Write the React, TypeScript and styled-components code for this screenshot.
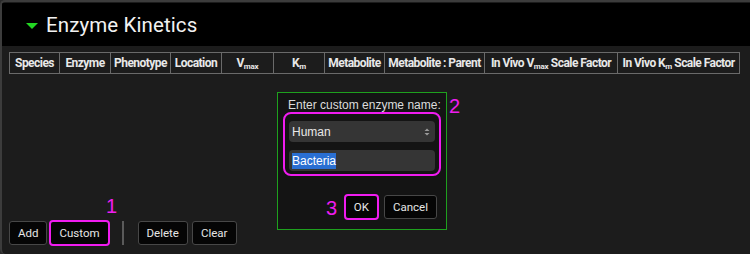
import styled, { createGlobalStyle, css } from 'styled-components'

const Global = createGlobalStyle`
  html, body { margin: 0; padding: 0; background: #2a2a2a; }
  * { box-sizing: border-box; }
`

const Panel = styled.div`
  position: relative;
  width: 750px;
  height: 254px;
  display: flex;
  flex-direction: column;
  background: #1c1c1c;
  border-top: 2px solid #3c3c3c;
  border-left: 2px solid #3c3c3c;
  border-radius: 5px 0 0 5px;
  overflow: hidden;
  font-family: Roboto, 'Liberation Sans', sans-serif;
`

const Header = styled.div`
  height: 43px;
  margin-top: 1px;
  background: #000;
  display: flex;
  align-items: center;
  gap: 8px;
  padding-left: 24px;
`

const Caret = styled.span`
  width: 0;
  height: 0;
  border-left: 6px solid transparent;
  border-right: 6px solid transparent;
  border-top: 6px solid #22d622;
  margin-top: 2px;
`

const Title = styled.h1`
  margin: 0;
  font-size: 20.5px;
  font-weight: 400;
  color: #f2f2f2;
  letter-spacing: 0.1px;
`

const Body = styled.div`
  flex: 1;
  display: flex;
  flex-direction: column;
  justify-content: space-between;
  padding: 6px 0 8px 7px;
`

const Table = styled.table`
  border-collapse: collapse;
  table-layout: fixed;
  width: 730px;
`

const Th = styled.th<{ $w: number }>`
  width: ${({ $w }) => $w}px;
  height: 21px;
  padding: 0;
  border: 1px solid #6a6a6a;
  color: #e8e8e8;
  font-size: 12px;
  font-weight: 700;
  letter-spacing: -0.55px;
  text-align: center;
  white-space: nowrap;
  overflow: hidden;
`

const Sub = styled.sub`
  font-size: 8px;
  vertical-align: -2px;
  letter-spacing: -0.2px;
`

const Toolbar = styled.div`
  display: flex;
  align-items: center;
  gap: 4px;
`

const Btn = styled.button<{ $hl?: boolean }>`
  height: 24px;
  padding: 0 8px;
  background: #050505;
  color: #e6e6e6;
  border: 1px solid #474747;
  border-radius: 3px;
  font-family: Roboto, 'Liberation Sans', sans-serif;
  font-size: 11.5px;
  ${({ $hl }) => $hl && css`
    border: 2px solid #f01cf0;
    border-radius: 4px;
    height: 26px;
    padding: 0 8px;
  `}
`

const FirstPair = styled.div`
  display: flex;
  align-items: center;
  gap: 2px;
`

const Divider = styled.span`
  width: 2px;
  height: 24px;
  background: #5a5a5a;
  margin: 0 10px 0 8px;
`

const Dialog = styled.div`
  position: absolute;
  left: 275px;
  top: 90px;
  width: 170px;
  height: 138px;
  border: 1px solid #1ea01e;
  background: #141414;
  padding: 5px 9px 0 9px;
  display: flex;
  flex-direction: column;
`

const Label = styled.div`
  font-family: 'Liberation Sans', Arial, sans-serif;
  font-size: 12px;
  line-height: 14px;
  white-space: nowrap;
  color: #dcdcdc;
  margin-left: 1px;
`

const FieldGroup = styled.div`
  margin: 0 -4px;
  padding: 7px 4px 3px 4px;
  border: 2px solid #f01cf0;
  border-radius: 8px;
  display: flex;
  flex-direction: column;
  gap: 8px;
`

const Field = styled.div`
  height: 21px;
  background: #353535;
  border-radius: 4px;
  display: flex;
  align-items: center;
  justify-content: space-between;
  padding: 0 5px 0 3px;
  font-family: 'Liberation Sans', Arial, sans-serif;
  font-size: 12px;
  color: #e8e8e8;
`

const Selected = styled.span`
  background: #2a6fd2;
  color: #fff;
  padding: 1px 0;
`

const Actions = styled.div`
  margin-top: auto;
  margin-bottom: 9px;
  display: flex;
  justify-content: flex-end;
  align-items: center;
  gap: 5px;
`

const Mark = styled.span<{ $x: number; $y: number }>`
  position: absolute;
  left: ${({ $x }) => $x}px;
  top: ${({ $y }) => $y}px;
  color: #f01cf0;
  font-family: 'Liberation Sans', Arial, sans-serif;
  font-size: 20px;
  line-height: 1;
`

const cols: [number, React.ReactNode][] = [
  [50, 'Species'],
  [51, 'Enzyme'],
  [60, 'Phenotype'],
  [51, 'Location'],
  [52, <>V<Sub>max</Sub></>],
  [51, <>K<Sub>m</Sub></>],
  [60, 'Metabolite'],
  [100, 'Metabolite : Parent'],
  [133, <>In Vivo V<Sub>max</Sub> Scale Factor</>],
  [122, <>In Vivo K<Sub>m</Sub> Scale Factor</>],
]

export default function App() {
  return (
    <>
      <Global />
      <Panel>
        <Header>
          <Caret />
          <Title>Enzyme Kinetics</Title>
        </Header>
        <Body>
          <Table>
            <thead>
              <tr>
                {cols.map(([w, label], i) => (
                  <Th key={i} $w={w}>{label}</Th>
                ))}
              </tr>
            </thead>
          </Table>
          <Toolbar>
            <FirstPair>
              <Btn>Add</Btn>
              <Btn $hl>Custom</Btn>
            </FirstPair>
            <Divider />
            <Btn>Delete</Btn>
            <Btn>Clear</Btn>
          </Toolbar>
        </Body>

        <Dialog>
          <Label>Enter custom enzyme name:</Label>
          <FieldGroup>
            <Field>
              <span>Human</span>
              <svg width="6" height="10" viewBox="0 0 6 10">
                <path d="M0.5 4 L3 1.5 L5.5 4 Z M0.5 6 L3 8.5 L5.5 6 Z" fill="#9a9a9a" />
              </svg>
            </Field>
            <Field>
              <Selected>Bacteria</Selected>
            </Field>
          </FieldGroup>
          <Actions>
            <Btn $hl>OK</Btn>
            <Btn>Cancel</Btn>
          </Actions>
        </Dialog>

        <Mark $x={104} $y={194}>1</Mark>
        <Mark $x={447} $y={94}>2</Mark>
        <Mark $x={324} $y={196}>3</Mark>
      </Panel>
    </>
  )
}
